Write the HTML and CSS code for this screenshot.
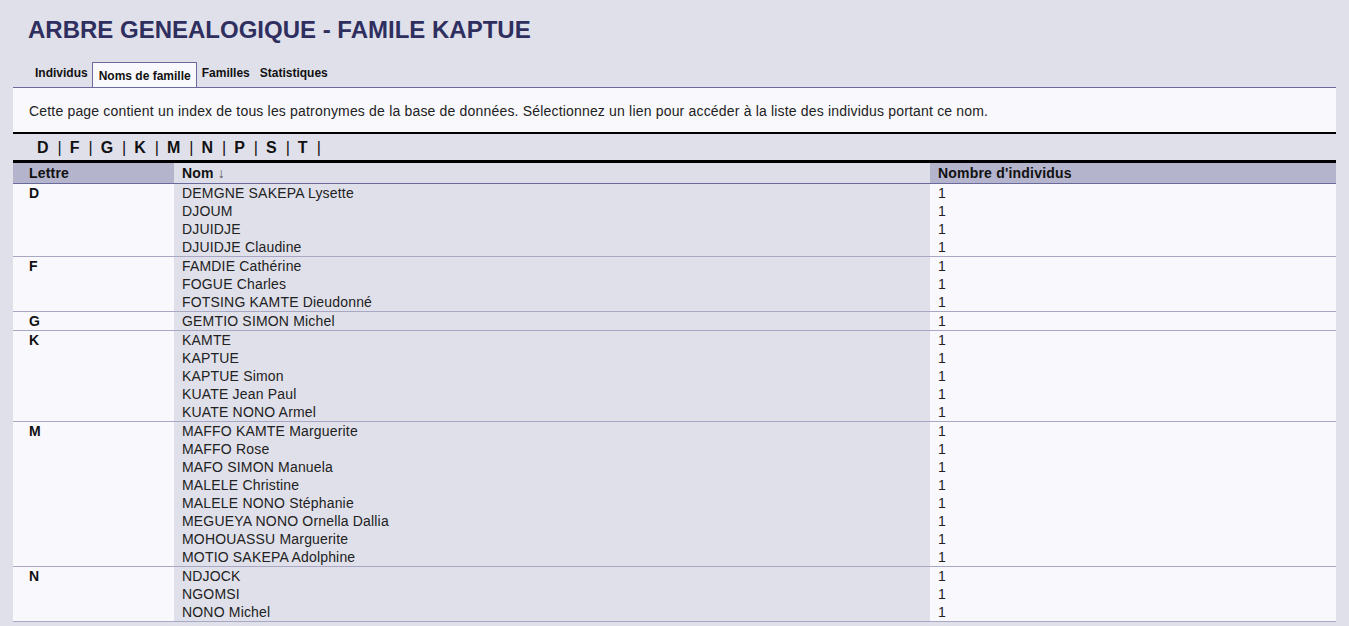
FILE: index.html
```html
<!DOCTYPE html>
<html lang="fr">
<head>
<meta charset="utf-8">
<title>Arbre généalogique - Famile KAPTUE</title>
<link rel="stylesheet" href="styles.css">
</head>
<body>
<h1 class="site-title">ARBRE GENEALOGIQUE - FAMILE KAPTUE</h1>
<nav class="tabs">
  <a class="tab tab-first" href="#">Individus</a>
  <a class="tab tab-active" href="#">Noms de famille</a>
  <a class="tab" href="#">Familles</a>
  <a class="tab" href="#">Statistiques</a>
</nav>
<div class="intro">
  <p>Cette page contient un index de tous les patronymes de la base de données. Sélectionnez un lien pour accéder à la liste des individus portant ce nom.</p>
</div>
<div class="alpha">
  <a href="#D">D</a><span class="sep">|</span><a href="#F">F</a><span class="sep">|</span><a href="#G">G</a><span class="sep">|</span><a href="#K">K</a><span class="sep">|</span><a href="#M">M</a><span class="sep">|</span><a href="#N">N</a><span class="sep">|</span><a href="#P">P</a><span class="sep">|</span><a href="#S">S</a><span class="sep">|</span><a href="#T">T</a><span class="sep">|</span>
</div>
<table class="surnames">
  <thead>
    <tr><th class="c-letter">Lettre</th><th class="c-name">Nom <span class="arrow">↓</span></th><th class="c-count">Nombre d'individus</th></tr>
  </thead>
  <tbody>
    <tr><td class="c-letter">D</td><td class="c-name"><div>DEMGNE SAKEPA Lysette</div><div>DJOUM</div><div>DJUIDJE</div><div>DJUIDJE Claudine</div></td><td class="c-count"><div>1</div><div>1</div><div>1</div><div>1</div></td></tr>
    <tr><td class="c-letter">F</td><td class="c-name"><div>FAMDIE Cathérine</div><div>FOGUE Charles</div><div>FOTSING KAMTE Dieudonné</div></td><td class="c-count"><div>1</div><div>1</div><div>1</div></td></tr>
    <tr><td class="c-letter">G</td><td class="c-name"><div>GEMTIO SIMON Michel</div></td><td class="c-count"><div>1</div></td></tr>
    <tr><td class="c-letter">K</td><td class="c-name"><div>KAMTE</div><div>KAPTUE</div><div>KAPTUE Simon</div><div>KUATE Jean Paul</div><div>KUATE NONO Armel</div></td><td class="c-count"><div>1</div><div>1</div><div>1</div><div>1</div><div>1</div></td></tr>
    <tr><td class="c-letter">M</td><td class="c-name"><div>MAFFO KAMTE Marguerite</div><div>MAFFO Rose</div><div>MAFO SIMON Manuela</div><div>MALELE Christine</div><div>MALELE NONO Stéphanie</div><div>MEGUEYA NONO Ornella Dallia</div><div>MOHOUASSU Marguerite</div><div>MOTIO SAKEPA Adolphine</div></td><td class="c-count"><div>1</div><div>1</div><div>1</div><div>1</div><div>1</div><div>1</div><div>1</div><div>1</div></td></tr>
    <tr><td class="c-letter">N</td><td class="c-name"><div>NDJOCK</div><div>NGOMSI</div><div>NONO Michel</div></td><td class="c-count"><div>1</div><div>1</div><div>1</div></td></tr>
  </tbody>
</table>
</body>
</html>
```
FILE: styles.css
```css
html, body {
  margin: 0;
  padding: 0;
}
body {
  background: #e0e0ea;
  font-family: "Liberation Sans", Arial, sans-serif;
  color: #222;
  padding: 0 13px 40px;
}
a {
  color: inherit;
  text-decoration: none;
}
.site-title {
  margin: 0;
  padding: 17px 0 0 15px;
  font-size: 24px;
  line-height: 26px;
  font-weight: bold;
  color: #2f2f5f;
}
.tabs {
  display: flex;
  align-items: flex-start;
  margin-top: 19px;
  padding-left: 17px;
  height: 25px;
}
.tab {
  display: block;
  font-size: 12px;
  line-height: 14px;
  font-weight: bold;
  color: #111;
  padding: 4px 5px 0;
}
.tab-first {
  padding-left: 5px;
  padding-right: 4px;
}
.tab-active {
  background: #f9f9fd;
  border: 1px solid #6a6a9c;
  border-bottom: none;
  padding: 6px 5px 4px 6px;
}
.intro {
  background: #f9f9fd;
  border-top: 1px solid #6a6a9c;
  border-bottom: 2px solid #000;
}
.intro p {
  margin: 0;
  padding: 15px 16px 12px;
  font-size: 14px;
  line-height: 17px;
  letter-spacing: 0.18px;
  color: #222;
}
.alpha {
  display: flex;
  align-items: center;
  height: 26px;
  padding: 1px 0 0 23px;
  box-sizing: border-box;
  font-size: 16px;
  font-weight: bold;
  color: #111;
}
.alpha a {
  padding: 0 1px;
}
.alpha .sep {
  font-weight: normal;
  padding: 0 7px 0 8px;
}
.surnames {
  width: 100%;
  border-collapse: collapse;
  border-top: 3px solid #000;
  font-size: 14px;
  letter-spacing: 0.18px;
}
.surnames th {
  text-align: left;
  font-size: 14px;
  letter-spacing: 0.2px;
  font-weight: bold;
  color: #111;
  height: 20px;
  padding: 0 8px;
  background: #b4b4cc;
  border-bottom: 1px solid #6a6a9c;
  vertical-align: middle;
}
.surnames th .arrow {
  font-weight: normal;
  color: #555;
}
.surnames th.c-name {
  background: #dedee8;
}
.surnames th.c-letter {
  padding-left: 16px;
}
.surnames td {
  padding: 0 8px;
  vertical-align: top;
  line-height: 18px;
  border-bottom: 1px solid #a8a8c4;
  background: #f9f9fd;
}
.surnames td.c-letter {
  width: 137px;
  padding-left: 16px;
  font-weight: bold;
  color: #111;
}
.surnames td.c-name {
  width: 740px;
  background: #e0e0ea;
}
.surnames td.c-count {
  color: #222;
}
```
